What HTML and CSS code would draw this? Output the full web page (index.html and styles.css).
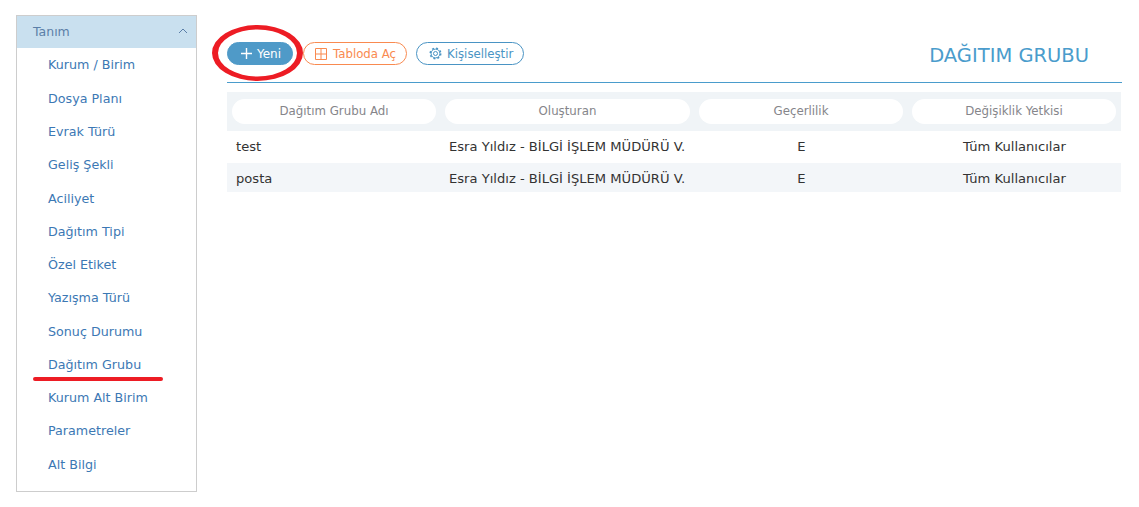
FILE: index.html
```html
<!DOCTYPE html>
<html lang="tr">
<head>
<meta charset="utf-8">
<title>Dağıtım Grubu</title>
<link rel="stylesheet" href="styles.css">
</head>
<body>
<div class="page">
  <aside class="sidebar">
    <div class="side-head"><span>Tanım</span>
      <svg class="chev" width="10" height="6" viewBox="0 0 10 6"><path d="M1 5l4-4 4 4" fill="none" stroke="#5a7ea8" stroke-width="1"/></svg>
    </div>
    <ul class="side-list">
      <li>Kurum / Birim</li>
      <li>Dosya Planı</li>
      <li>Evrak Türü</li>
      <li>Geliş Şekli</li>
      <li>Aciliyet</li>
      <li>Dağıtım Tipi</li>
      <li>Özel Etiket</li>
      <li>Yazışma Türü</li>
      <li>Sonuç Durumu</li>
      <li class="marked">Dağıtım Grubu</li>
      <li>Kurum Alt Birim</li>
      <li>Parametreler</li>
      <li>Alt Bilgi</li>
    </ul>
  </aside>
  <main class="main">
    <div class="toolbar">
      <div class="actions">
        <button class="btn btn-primary">
          <svg width="11" height="11" viewBox="0 0 11 11"><path d="M5.5 0v11M0 5.5h11" stroke="#fff" stroke-width="1.4"/></svg>Yeni
          <svg class="ring" width="91" height="56" viewBox="0 0 91 56"><path fill="#ed1c24" fill-rule="evenodd" d="M0 28a45.5 28 0 1 0 91 0a45.5 28 0 1 0-91 0zM6 28a39.5 23.5 0 1 0 79 0a39.5 23.5 0 1 0-79 0z"/></svg>
        </button>
        <button class="btn btn-orange">
          <svg width="12" height="12" viewBox="0 0 12 12"><path d="M.5.5h11v11H.5zM6 .5v11M.5 6h11" fill="none" stroke="#f98a50" stroke-width="1"/></svg>Tabloda Aç
        </button>
        <button class="btn btn-outline">
          <svg width="13" height="13" viewBox="0 0 13 13"><circle cx="6.5" cy="6.5" r="2" fill="none" stroke="#4a94c4"/><circle cx="6.5" cy="6.5" r="4.4" fill="none" stroke="#4a94c4" stroke-width="1"/><circle cx="6.5" cy="6.5" r="5.3" fill="none" stroke="#4a94c4" stroke-width="1.4" stroke-dasharray="2 2.16"/></svg>Kişiselleştir
        </button>
      </div>
      <h1 class="title">DAĞITIM GRUBU</h1>
    </div>
    <table class="grid">
      <thead>
        <tr>
          <th class="c1"><span>Dağıtım Grubu Adı</span></th>
          <th class="c2"><span>Oluşturan</span></th>
          <th class="c3"><span>Geçerlilik</span></th>
          <th class="c4"><span>Değişiklik Yetkisi</span></th>
        </tr>
      </thead>
      <tbody>
        <tr class="row"><td class="first">test</td><td>Esra Yıldız - BİLGİ İŞLEM MÜDÜRÜ V.</td><td class="center">E</td><td class="center">Tüm Kullanıcılar</td></tr>
        <tr class="alt"><td class="first">posta</td><td>Esra Yıldız - BİLGİ İŞLEM MÜDÜRÜ V.</td><td class="center">E</td><td class="center">Tüm Kullanıcılar</td></tr>
      </tbody>
    </table>
  </main>
</div>
</body>
</html>
```
FILE: styles.css
```css
* { box-sizing: border-box; }
html, body { margin: 0; background: #fff; }
body {
  font-family: "DejaVu Sans", Verdana, sans-serif;
  font-size: 12px;
  height: 507px;
  overflow: hidden;
}
.page {
  display: flex;
  align-items: flex-start;
  padding: 15px 17px 0 16px;
  gap: 30px;
}
.sidebar {
  width: 181px;
  flex: none;
  height: 477px;
  border: 1px solid #cdcdcd;
}
.side-head {
  height: 32px;
  background: #c9e0ef;
  color: #5b7fa8;
  display: flex;
  align-items: center;
  justify-content: space-between;
  padding: 0 8px 2px 16px;
  font-size: 12.5px;
}
.side-list {
  list-style: none;
  margin: 0;
  padding: 0.45px 0 0;
}
.side-list li {
  position: relative;
  height: 33.27px;
  line-height: 33px;
  padding-left: 31px;
  color: #3c78b4;
  font-size: 12.7px;
}
.marked::after {
  content: "";
  position: absolute;
  left: 16px;
  top: 29px;
  width: 130px;
  height: 4.5px;
  border-radius: 2px;
  background: #ed1c24;
}
.main { flex: 1; min-width: 0; }
.toolbar {
  height: 68px;
  border-bottom: 1px solid #4a9ccc;
  display: flex;
  align-items: flex-start;
  justify-content: space-between;
  padding-top: 27px;
}
.actions { display: flex; gap: 9px; }
.btn {
  position: relative;
  height: 23px;
  padding: 0 10px 0 11px;
  border-radius: 12px;
  display: flex;
  align-items: center;
  gap: 5px;
  font: 11.75px "DejaVu Sans", Verdana, sans-serif;
  background: #fff;
  border: 1px solid;
}
.btn-primary {
  width: 66px;
  margin-right: 1px;
  padding: 0 0 0 13px;
  background: #4f9ac8;
  border-color: #4f9ac8;
  color: #fff;
  font-size: 12px;
}
.ring {
  position: absolute;
  left: -16px;
  top: -18px;
}
.btn-orange { color: #f98a50; border-color: #f98a50; gap: 6px; }
.btn-outline { color: #4a94c4; border-color: #4a94c4; padding-left: 12px; }
.title {
  margin: 2px 33px 0 0;
  font-size: 19.5px;
  font-weight: 400;
  color: #4a9ccc;
  line-height: 24px;
}
.grid {
  width: 894px;
  margin-top: 9px;
  border-collapse: collapse;
  table-layout: fixed;
}
.grid thead tr { background: #f0f4f7; height: 39px; }
.grid th { padding: 0 5px 0 4px; font-weight: 400; }
.grid th.c1 { padding: 0 5px; }
.grid th span {
  display: block;
  height: 25px;
  line-height: 24px;
  background: #fff;
  border-radius: 13px;
  color: #85858a;
  font-size: 11.8px;
}
.c1 { width: 214px; }
.c2 { width: 254px; }
.c3 { width: 213px; }
.c4 { width: 213px; }
.grid td {
  height: 32px;
  padding: 0 0 0 8px;
  color: #333;
  font-size: 13.1px;
  white-space: nowrap;
}
.grid td.first { padding-left: 9px; }
.grid td.center { padding: 0; text-align: center; }
.grid .row td { padding-bottom: 2px; }
.grid .alt { background: #f3f6f9; }
.grid .alt td { height: 29px; padding-top: 1px; }
```
